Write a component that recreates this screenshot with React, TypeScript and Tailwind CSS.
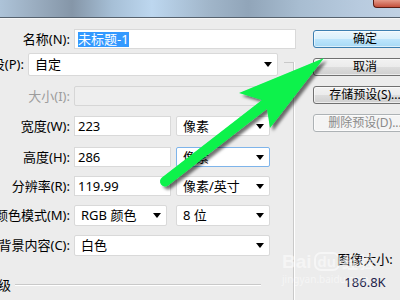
const FONT = "font-['Noto_Sans','Noto_Sans_CJK_SC',sans-serif]";

function Arrow() {
  return <span className="ml-auto mr-[5px] h-0 w-0 border-x-[4px] border-t-[5px] border-x-transparent border-t-black" />;
}

function Label({ text, width = "w-[70px]", muted = false }: { text: string; width?: string; muted?: boolean }) {
  return (
    <div className={`${width} flex shrink-0 justify-end whitespace-nowrap ${muted ? "text-[#9d9d9d]" : "text-black"}`}>
      {text}
    </div>
  );
}

function Select({ value, width, focus = false }: { value: string; width: string; focus?: boolean }) {
  return (
    <div
      className={`${width} flex h-full shrink-0 items-center rounded-[2px] border bg-white pl-[6px] ${
        focus ? "border-[#7eb4ea]" : "border-[#d9d9d9]"
      }`}
    >
      <span className="whitespace-nowrap">{value}</span>
      <Arrow />
    </div>
  );
}

function Input({ value, width }: { value: string; width: string }) {
  return (
    <div className={`${width} flex h-full shrink-0 items-center border border-[#d9d9d9] bg-white pl-[3px]`}>
      {value}
    </div>
  );
}

function Button({ label, kind = "normal" }: { label: string; kind?: "default" | "normal" | "disabled" }) {
  const styles = {
    default:
      "border-[#3c7fb1] bg-[linear-gradient(#eaf6fd_0%,#d9f0fc_50%,#bee6fd_50%,#a7d9f5_100%)] text-black",
    normal:
      "border-[#707070] bg-[linear-gradient(#f2f2f2_0%,#ebebeb_50%,#dddddd_50%,#cfcfcf_100%)] text-black",
    disabled: "border-[#adb2b5] bg-[#f4f4f4] text-[#8a8a8a]",
  }[kind];
  return (
    <div
      className={`flex h-[18px] w-[104px] shrink-0 items-center justify-center whitespace-nowrap rounded-[3px] border text-[12px] leading-none shadow-[inset_0_0_0_1px_rgba(255,255,255,0.6)] ${styles}`}
    >
      {label}
    </div>
  );
}

export default function App() {
  return (
    <div className={`relative flex h-[300px] w-[400px] flex-col overflow-hidden bg-[#ececec] text-[13px] leading-none ${FONT}`}>
      {/* title bar */}
      <div className="flex h-[18px] shrink-0 justify-end border-b border-[#56626e] bg-[linear-gradient(90deg,#adc3d8_0%,#9cafc2_8%,#8596a8_18%,#a6bfd6_28%,#bdd7ef_38%,#a1b6ca_52%,#91a5b9_62%,#a8bdd1_75%,#b8cbdf_90%,#c0d1e3_100%)]">
        <div className="h-[8px] w-[27px] rounded-bl-[4px] border-b border-l border-[#5b1b12] bg-[linear-gradient(#e59a89,#c4503c)]" />
      </div>

      <div className="flex flex-1 border-t border-[#f6f6f6]">
        {/* form column */}
        <div className="flex w-[284px] shrink-0 flex-col pt-[10px]">
          <div className="flex h-[20px] items-center">
            <Label text="名称(N):" />
            <div className="ml-[4px] flex h-full w-[222px] shrink-0 items-center border border-[#d9d9d9] bg-white pl-[3px]">
              <span className="bg-[#3399ff] py-[1px] text-white">未标题-1</span>
            </div>
          </div>
          <div className="mt-[4px] flex h-[23px] items-center">
            <Label text="预设(P):" width="w-[24px]" />
            <div className="ml-[4px] h-full">
              <Select value="自定" width="w-[250px]" />
            </div>
          </div>
          <div className="mt-[10px] flex h-[20px] items-center">
            <Label text="大小(I):" muted />
            <div className="ml-[4px] h-full w-[203px] rounded-[2px] border border-[#d6d6d6] bg-[#eeeeee]" />
          </div>
          <div className="mt-[10px] flex h-[20px] items-center">
            <Label text="宽度(W):" />
            <div className="ml-[4px] flex h-full gap-[5px]">
              <Input value="223" width="w-[97px]" />
              <Select value="像素" width="w-[94px]" />
            </div>
          </div>
          <div className="mt-[11px] flex h-[20px] items-center">
            <Label text="高度(H):" />
            <div className="ml-[4px] flex h-full gap-[5px]">
              <Input value="286" width="w-[97px]" />
              <Select value="像素" width="w-[94px]" focus />
            </div>
          </div>
          <div className="mt-[9px] flex h-[20px] items-center">
            <Label text="分辨率(R):" />
            <div className="ml-[4px] flex h-full gap-[5px]">
              <Input value="119.99" width="w-[97px]" />
              <Select value="像素/英寸" width="w-[94px]" />
            </div>
          </div>
          <div className="mt-[9px] flex h-[21px] items-center">
            <Label text="颜色模式(M):" />
            <div className="ml-[4px] flex h-full gap-[9px]">
              <Select value="RGB 颜色" width="w-[93px]" />
              <Select value="8 位" width="w-[94px]" />
            </div>
          </div>
          <div className="mt-[9px] flex h-[21px] items-center">
            <Label text="背景内容(C):" />
            <div className="ml-[4px] h-full">
              <Select value="白色" width="w-[196px]" />
            </div>
          </div>
          <div className="mt-[22px] flex h-[14px] items-center">
            <Label text="高级" width="w-[11px]" />
            <div className="ml-[4px] h-[2px] w-[246px] border-t border-b border-t-[#c9c9c9] border-b-white" />
          </div>
        </div>

        {/* group box edge */}
        <div className="mt-[43px] w-[10px] shrink-0 border-t border-r border-[#c9c9c9] shadow-[1px_0_0_#ffffff]" />

        {/* buttons column */}
        <div className="flex shrink-0 flex-col gap-[10px] pl-[19px] pt-[11px]">
          <Button label="确定" kind="default" />
          <Button label="取消" />
          <Button label="存储预设(S)..." />
          <Button label="删除预设(D)..." kind="disabled" />
          <div className="mt-[111px] flex w-[104px] flex-col items-center gap-[10px]">
            <span className="whitespace-nowrap">图像大小:</span>
            <span className="text-[#23234a]">186.8K</span>
          </div>
        </div>
      </div>

      {/* baidu watermark */}
      <div className="pointer-events-none absolute left-[282px] top-[252px] flex flex-col text-white/50">
        <div className="flex items-end gap-[2px] font-['Liberation_Sans','Noto_Sans_CJK_SC',sans-serif]">
          <span className="text-[19px] font-bold leading-none">Bai</span>
          <span className="rounded-[7px] border-2 border-white/50 px-[2px] text-[15px] font-bold leading-none">du</span>
          <span className="text-[16px] font-bold leading-none">经验</span>
        </div>
        <span className="mt-[3px] text-[10px] leading-none">jingyan.baidu.com</span>
      </div>

      {/* green arrow annotation */}
      <svg className="pointer-events-none absolute left-0 top-0" width="400" height="300" viewBox="0 0 400 300">
        <defs>
          <filter id="sh" x="-20%" y="-20%" width="140%" height="140%">
            <feDropShadow dx="3" dy="3" stdDeviation="1.8" floodColor="#000" floodOpacity="0.55" />
          </filter>
        </defs>
        <g filter="url(#sh)" fill="#08f24c">
          <line x1="165" y1="181.5" x2="265" y2="104" stroke="#08f24c" strokeWidth="10" strokeLinecap="round" />
          <polygon points="239,93 324,58 270,128 267,109 262,100" />
        </g>
      </svg>
    </div>
  );
}
